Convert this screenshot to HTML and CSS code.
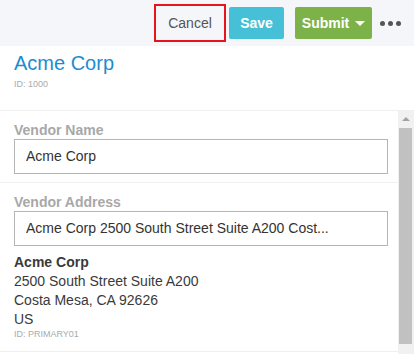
FILE: index.html
```html
<!DOCTYPE html>
<html lang="en">
<head>
  <meta charset="UTF-8">
  <meta name="viewport" content="width=device-width, initial-scale=1.0">
  <title>Vendor</title>
  <link rel="stylesheet" href="styles.css">
</head>
<body>
  <div class="toolbar">
    <button class="btn btn-cancel">Cancel</button>
    <button class="btn btn-save">Save</button>
    <button class="btn btn-submit">Submit <span class="caret"></span></button>
    <div class="more"><span></span><span></span><span></span></div>
  </div>

  <div class="header">
    <div class="title">Acme Corp</div>
    <div class="small-id">ID: 1000</div>
  </div>

  <div class="main">
    <div class="content">
      <div class="field">
        <div class="label">Vendor Name</div>
        <div class="input">Acme Corp</div>
      </div>
      <div class="field">
        <div class="label">Vendor Address</div>
        <div class="input">Acme Corp 2500 South Street Suite A200 Cost...</div>
        <div class="address">
          <div class="addr-name">Acme Corp</div>
          <div>2500 South Street Suite A200</div>
          <div>Costa Mesa, CA 92626</div>
          <div>US</div>
          <div class="small-id">ID: PRIMARY01</div>
        </div>
      </div>
    </div>
    <!-- scrollbar drawn by hand -->
    <div class="scrollbar">
      <div class="arrow-up"></div>
      <div class="thumb"></div>
    </div>
  </div>
</body>
</html>
```

FILE: styles.css
```css
body {
  margin: 0;
  font-family: "Liberation Sans", Arial, sans-serif;
  color: #333;
  background-color: #fff;
}
.toolbar {
  height: 46px;
  background-color: #f4f6f9;
  display: flex;
  justify-content: flex-end;
  align-items: center;
  padding-right: 13px;
}
.btn {
  height: 32px;
  border: none;
  border-radius: 2px;
  font-family: inherit;
  font-size: 14px;
  padding: 0;
  margin-left: 5px;
}
.btn-cancel {
  width: 72px;
  height: 38px;
  background-color: #f4f6f9;
  color: #555;
  border: 2px solid #e8141b;
  border-radius: 0;
}
.btn-save {
  width: 55px;
  background-color: #46c0d6;
  color: #fff;
  font-weight: bold;
  margin-left: 3px;
}
.btn-submit {
  width: 77px;
  background-color: #7db249;
  color: #fff;
  font-weight: bold;
  margin-left: 11px;
}
.caret {
  display: inline-block;
  width: 0;
  height: 0;
  border-left: 5px solid transparent;
  border-right: 5px solid transparent;
  border-top: 5px solid #fff;
  vertical-align: 2px;
  margin-left: 2px;
}
.more {
  display: flex;
  gap: 3px;
  margin-left: 8px;
  width: 21px;
}
.more span {
  width: 5px;
  height: 5px;
  border-radius: 50%;
  background-color: #555;
}
.header {
  height: 59px;
  padding: 5px 14px 0;
  border-bottom: 1px solid #eef0f2;
}
.title {
  font-size: 20px;
  line-height: 24px;
  color: #1b8dcf;
}
.small-id {
  font-size: 9px;
  line-height: 12px;
  color: #aaa;
  margin-top: 3px;
}
.main {
  display: flex;
  height: 243px;
}
.content {
  flex: 1;
  overflow: hidden;
}
.field {
  padding: 11px 10px 8px 14px;
  border-bottom: 1px solid #eef0f2;
}
.label {
  font-size: 14px;
  line-height: 16px;
  font-weight: bold;
  color: #a8a8a8;
  margin-bottom: 1px;
}
.input {
  height: 33px;
  line-height: 33px;
  border: 1px solid #b5b5b5;
  padding: 0 11px;
  font-size: 14px;
  color: #333;
  white-space: nowrap;
  overflow: hidden;
}
.address {
  margin-top: 7px;
  margin-bottom: 4px;
  font-size: 14px;
  line-height: 19px;
  color: #3a3a3a;
}
.addr-name {
  font-weight: bold;
}
.address .small-id {
  margin-top: 0;
  line-height: 10px;
}
.scrollbar {
  width: 16px;
  background-color: #f1f1f1;
  display: flex;
  flex-direction: column;
  align-items: center;
}
.arrow-up {
  width: 0;
  height: 0;
  border-left: 4px solid transparent;
  border-right: 4px solid transparent;
  border-bottom: 4px solid #a3a3a3;
  margin: 6px 0 7px 0;
}
.thumb {
  width: 13px;
  height: 216px;
  background-color: #c1c1c1;
  align-self: flex-start;
  margin-left: 1px;
}
```
